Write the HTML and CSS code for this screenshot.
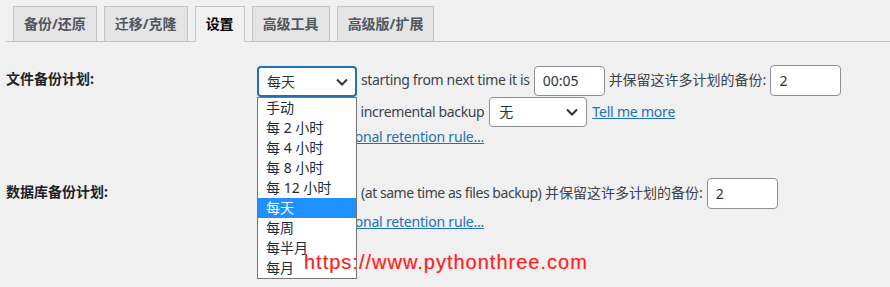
FILE: index.html
```html
<!DOCTYPE html>
<html lang="zh-CN">
<head>
    <meta charset="UTF-8">
    <title>UpdraftPlus 设置</title>
    <link rel="stylesheet" href="styles.css">
</head>
<body>
    <div class="wrap">
        <nav class="tabs">
            <a class="tab" href="#">备份/还原</a>
            <a class="tab" href="#">迁移/克隆</a>
            <a class="tab active" href="#">设置</a>
            <a class="tab" href="#">高级工具</a>
            <a class="tab" href="#">高级版/扩展</a>
        </nav>

        <div class="settings">
            <div class="row">
                <div class="label">文件备份计划:</div>
                <div class="field">
                    <div class="line line-main">
                        <div class="select-wrap">
                            <div class="select focused">
                                <span>每天</span>
                                <svg class="chevron" width="12" height="8" viewBox="0 0 12 8"><path d="M1 1.5l5 5 5-5" fill="none" stroke="#2c3338" stroke-width="2"/></svg>
                            </div>
                            <ul class="dropdown">
                                <li>手动</li>
                                <li>每 2 小时</li>
                                <li>每 4 小时</li>
                                <li>每 8 小时</li>
                                <li>每 12 小时</li>
                                <li class="selected">每天</li>
                                <li>每周</li>
                                <li>每半月</li>
                                <li>每月</li>
                            </ul>
                        </div>
                        <span class="text en">starting from next time it is</span>
                        <input class="input time" type="text" value="00:05">
                        <span class="text">并保留这许多计划的备份:</span>
                        <input class="input count" type="text" value="2">
                    </div>
                    <div class="line line-incr">
                        <span class="text en">And follow with incremental backup</span>
                        <div class="select small">
                            <span>无</span>
                            <svg class="chevron" width="12" height="8" viewBox="0 0 12 8"><path d="M1 1.5l5 5 5-5" fill="none" stroke="#2c3338" stroke-width="2"/></svg>
                        </div>
                        <a class="link" href="#">Tell me more</a>
                    </div>
                    <div class="line line-link">
                        <a class="link" href="#">Add an additional retention rule...</a>
                    </div>
                </div>
            </div>

            <div class="row row-db">
                <div class="label">数据库备份计划:</div>
                <div class="field">
                    <div class="line line-main">
                        <div class="select">
                            <span>每天</span>
                            <svg class="chevron" width="12" height="8" viewBox="0 0 12 8"><path d="M1 1.5l5 5 5-5" fill="none" stroke="#2c3338" stroke-width="2"/></svg>
                        </div>
                        <span class="text"><span class="en">(at same time as files backup)</span> 并保留这许多计划的备份:</span>
                        <input class="input count" type="text" value="2">
                    </div>
                    <div class="line line-link">
                        <a class="link" href="#">Add an additional retention rule...</a>
                    </div>
                </div>
            </div>
        </div>

        <div class="watermark">https://www.pythonthree.com</div>
    </div>
</body>
</html>
```

FILE: styles.css
```css
body {
    margin: 0;
    background-color: #f0f0f1;
    color: #3c434a;
    font-family: "Noto Sans", "Noto Sans CJK SC", sans-serif;
    font-size: 14px;
}

.wrap {
    position: relative;
    height: 287px;
    overflow: hidden;
}

/* tabs */
.tabs {
    display: flex;
    margin-left: 6px;
    padding-top: 6px;
    border-bottom: 1px solid #c3c4c7;
}

.tab {
    margin-left: 7px;
    margin-bottom: -1px;
    padding: 5px 10px;
    line-height: 24px;
    font-weight: 700;
    color: #50575e;
    text-decoration: none;
    background-color: #e4e4e5;
    border: 1px solid #c3c4c7;
}

.tab.active {
    color: #000;
    background-color: #f0f0f1;
    border-bottom-color: #f0f0f1;
}

/* settings rows */
.settings {
    margin-top: 22px;
    margin-left: 6px;
}

.row {
    display: grid;
    grid-template-columns: 251px 1fr;
}

.row-db {
    margin-top: 30px;
}

.label {
    padding-top: 5px;
    line-height: 20px;
    font-weight: 700;
    color: #1d2327;
}

.line {
    display: flex;
    align-items: center;
    gap: 4px;
    line-height: 20px;
}

.en {
    letter-spacing: -0.35px;
}

.row-db .en {
    letter-spacing: -0.45px;
}

.line-main {
    height: 32px;
}

.line-incr {
    height: 30px;
    margin-top: 1px;
    gap: 5px;
}

.line-incr .text {
    margin-left: 4px;
}

.line-link {
    margin-top: 0;
    padding-left: 13px;
}

.row-db .line-link {
    margin-top: 3px;
}

.select-wrap {
    position: relative;
    align-self: flex-start;
    margin-top: 2px;
}

.select {
    box-sizing: border-box;
    display: flex;
    align-items: center;
    justify-content: space-between;
    width: 100px;
    height: 31px;
    padding: 0 8px 0 9px;
    background-color: #fff;
    border: 1px solid #8c8f94;
    border-radius: 4px;
    color: #2c3338;
}

.select.focused {
    border: 2px solid #2271b1;
    padding-left: 8px;
    padding-right: 7px;
}

.select.small {
    width: 98px;
    height: 30px;
}

.chevron {
    display: block;
}

.input {
    box-sizing: border-box;
    width: 71px;
    height: 31px;
    padding: 0 8px;
    background-color: #fff;
    border: 1px solid #8c8f94;
    border-radius: 4px;
    color: #2c3338;
    font-family: inherit;
    font-size: 14px;
}

.input.time {
    height: 30px;
    margin-top: 1px;
}

.link {
    color: #2271b1;
    text-decoration: underline;
    letter-spacing: -0.2px;
}

/* open dropdown of the files schedule */
.dropdown {
    position: absolute;
    top: 31px;
    left: 0;
    z-index: 2;
    box-sizing: border-box;
    width: 100px;
    margin: 0;
    padding: 0;
    list-style: none;
    background-color: #fff;
    border: 1px solid #767676;
}

.dropdown li {
    height: 20px;
    padding-left: 8px;
    line-height: 20px;
    color: #1c2a3a;
}

.dropdown li.selected {
    background-color: #1e90ff;
    color: #fff;
}

.watermark {
    position: absolute;
    left: 304px;
    top: 251px;
    z-index: 3;
    font-family: "Liberation Sans", Arial, sans-serif;
    font-size: 20px;
    letter-spacing: 1px;
    color: #ff1f1f;
    text-shadow: 0 0 1px rgba(255, 80, 80, 0.5);
}
```
